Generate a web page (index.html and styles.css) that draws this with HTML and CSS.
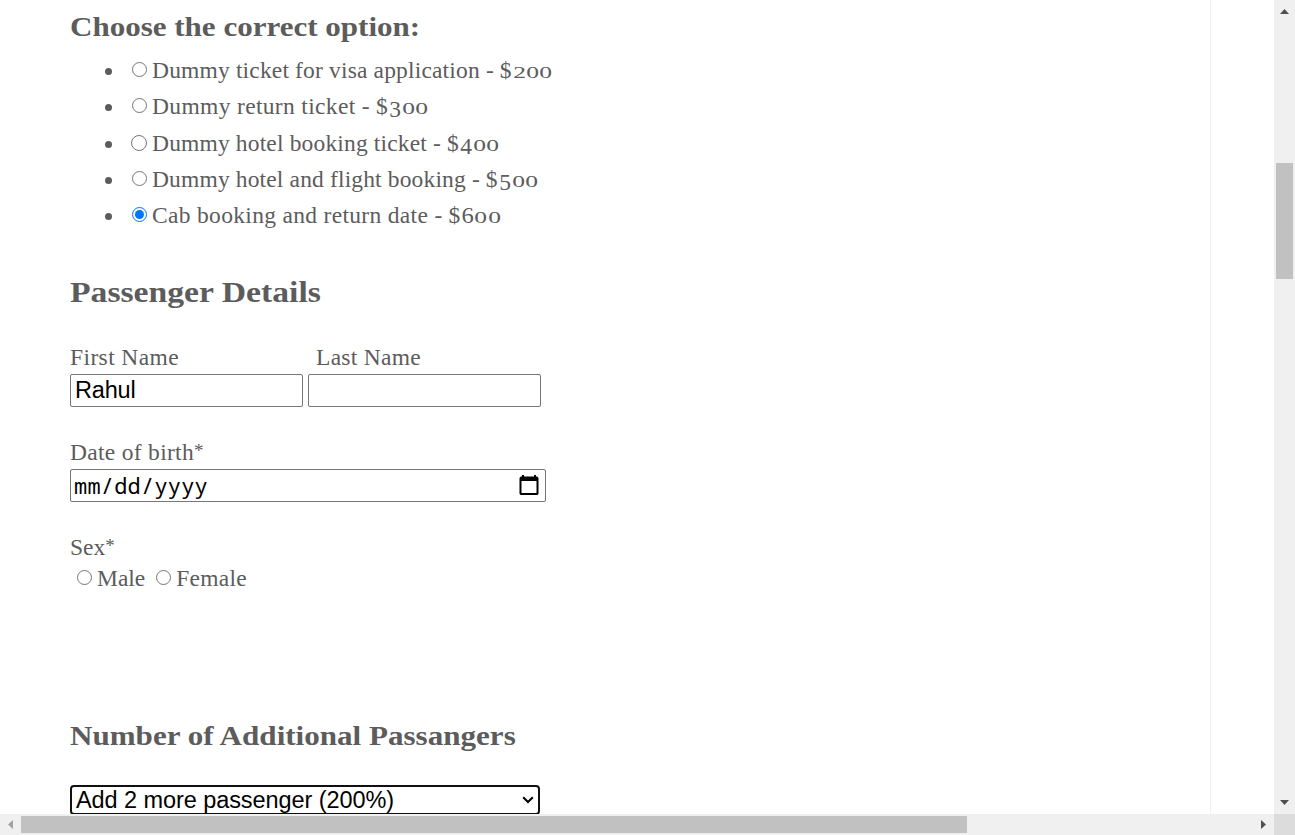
FILE: index.html
```
<!DOCTYPE html>
<html lang="en"><head><meta charset="utf-8"><title>Booking form</title><link rel="stylesheet" href="styles.css"></head>
<body>
<main class="page"><form class="form">
<h2 class="options-title">Choose the correct option:</h2>
<ul class="options">
<li><input type="radio" name="option"><span><span class="ticket-visa">Dummy ticket for visa application -</span> <span class="price">$<i class="low">2</i><i class="low">0</i><i class="low">0</i></span></span></li>
<li><input type="radio" name="option"><span><span class="ticket-return">Dummy return ticket -</span> <span class="price">$<i class="desc">3</i><i class="low">0</i><i class="low">0</i></span></span></li>
<li><input type="radio" name="option" class="big"><span><span class="ticket-hotel">Dummy hotel booking ticket -</span> <span class="price">$<i class="desc">4</i><i class="low">0</i><i class="low">0</i></span></span></li>
<li><input type="radio" name="option"><span><span class="ticket-flight">Dummy hotel and flight booking -</span> <span class="price">$<i class="desc">5</i><i class="low">0</i><i class="low">0</i></span></span></li>
<li><input type="radio" name="option" checked><span><span class="ticket-cab">Cab booking and return date -</span> <span class="price">$<i>6</i><i class="low">0</i><i class="low">0</i></span></span></li>
</ul>
<h2 class="details-title">Passenger Details</h2>
<div class="names">
<label class="name"><span class="caption first">First Name</span><input class="field" type="text" value="Rahul"></label>
<label class="name"><span class="caption last">Last Name</span><input class="field" type="text"></label>
</div>
<div class="caption gap birth">Date of birth<span class="star">*</span></div>
<div class="date"><span class="mask">mm/dd/yyyy</span><svg width="20" height="22" viewBox="0 0 20 22"><path d="M3 1h2v1.500h10V1h2v1.500h1.200L19.500 4v15.700L18.500 21h-17L.500 19.700V4l1.300-1.500H3zM2.500 7v12h15V7z" fill="#000" fill-rule="evenodd"/></svg></div>
<div class="caption gap">Sex<span class="star">*</span></div>
<div class="sex"><input type="radio" name="sex"><span class="male">Male</span><input type="radio" name="sex"><span class="female">Female</span></div>
<h2 class="number-title">Number of Additional Passangers</h2>
<div class="select"><span>Add 2 more passenger (200%)</span><svg width="12" height="8" viewBox="0 0 12 8"><path d="M1.200 1.200 6 6l4.800-4.800" fill="none" stroke="#000" stroke-width="2"/></svg></div>
</form></main>
<div class="vbar"><svg class="up" width="9" height="5"><path d="M0 5 4.500 0 9 5z" fill="#505050"/></svg><div class="vthumb"></div><svg class="down" width="9" height="5"><path d="M0 0h9L4.500 5z" fill="#505050"/></svg></div>
<div class="hbar"><svg width="5" height="9"><path d="M5 0v9L0 4.500z" fill="#a3a3a3"/></svg><div class="hthumb"></div><svg class="right" width="5" height="9"><path d="M0 0v9l5-4.500z" fill="#505050"/></svg></div>
<div class="corner"></div>
</body></html>
```
FILE: styles.css
```
* { box-sizing: border-box; }
body { margin: 0; width: 1295px; height: 835px; overflow: hidden; display: grid; grid-template: 814px 21px / 1274px 21px; background: #fff; color: #5c5c5c; font: 23.5px "Liberation Serif", serif; }
.page { width: 1211px; height: 814px; overflow: hidden; border-right: 1px solid #f0f0f0; padding: 9px 0 0 70px; white-space: nowrap; }
.form { display: flex; flex-direction: column; align-items: flex-start; }
h2 { margin: 0; font-weight: bold; transform-origin: left; }
.options-title { font-size: 28px; line-height: 36px; margin-bottom: 8px; transform: scaleX(1.108); }
.options { list-style: none; margin: 0; padding: 0 0 0 35px; }
.options li { display: flex; align-items: center; height: 36px; line-height: 36px; }
.options li:nth-child(2) { height: 37px; }
.options li:nth-child(2) ~ li { height: 36px; }
.options li:nth-child(2) { padding-bottom: 1px; }
.options li::before { content: ""; width: 7px; height: 7px; border-radius: 50%; background: #5c5c5c; margin: 1px 20px 0 0; }
input[type="radio"] { width: 15px; height: 15px; margin: 0 5px 3px 0; flex: none; }
.options input[type="radio"] { margin: 0 5.5px 3px -.5px; }
.options input.big { width: 16px; height: 16px; margin: 0 5px 3px -1px; }
.ticket-visa { letter-spacing: .165px; }
.ticket-return { letter-spacing: .343px; }
.ticket-hotel { letter-spacing: .158px; }
.ticket-flight { letter-spacing: .15px; }
.ticket-cab { letter-spacing: .32px; }
.price { letter-spacing: 1px; }
.price i { font-style: normal; display: inline-block; width: 13.2px; letter-spacing: 0; text-align: center; transform: scaleX(1.05); }
.price .low { font-size: 16.5px; transform: scaleX(1.55); }
.price .desc { transform: translateY(3px); }
.details-title { font-size: 30px; line-height: 40px; margin-top: 38px; transform: scaleX(1.122); }
.names { display: flex; gap: 5px; margin-top: 30px; }
.name { display: flex; flex-direction: column; }
.caption { line-height: 31px; margin-bottom: 1px; }
.first { letter-spacing: .391px; }
.last { padding-left: 8px; letter-spacing: .283px; }
.birth { letter-spacing: .3px; }
.star { font-size: 19px; line-height: 1; vertical-align: 3px; }
.gap { margin-top: 30px; }
.field { width: 233px; height: 33px; border: 1px solid #767676; border-radius: 2px; padding: 0 4px; font: 23.5px "Liberation Sans", sans-serif; letter-spacing: -.2px; color: #000; }
.date { width: 476px; height: 33px; border: 1px solid #767676; border-radius: 2px; padding: 0 6px 2px 3px; display: flex; align-items: center; justify-content: space-between; color: #000; font: 22px "Noto Sans Mono", "DejaVu Sans Mono", monospace; letter-spacing: .198px; }
.sex { display: flex; align-items: center; height: 31px; line-height: 31px; padding-left: 7px; margin-top: -1px; }
.sex input[type="radio"] { margin-bottom: 2px; }
.male { margin-right: 11px; }
.female { letter-spacing: .25px; }
.number-title { font-size: 27.5px; line-height: 40px; margin-top: 122px; transform: scaleX(1.13); }
.select { width: 470px; height: 30px; margin-top: 29px; border: 2px solid #101010; border-radius: 4px; padding: 0 4px; display: flex; align-items: center; justify-content: space-between; color: #000; font: 23.5px "Liberation Sans", sans-serif; letter-spacing: -.076px; }
.vbar { background: #f0f0f0; display: flex; flex-direction: column; align-items: center; padding-top: 9px; }
.vthumb { width: 17px; height: 116px; margin-top: 149px; background: #c1c1c1; }
.down { margin-top: 521px; }
.hbar { background: #f0f0f0; display: flex; align-items: center; padding-left: 8px; }
.hthumb { width: 946px; height: 17px; margin-left: 8px; background: #c1c1c1; }
.right { margin-left: 294px; }
.corner { background: #dcdcdc; }
```
